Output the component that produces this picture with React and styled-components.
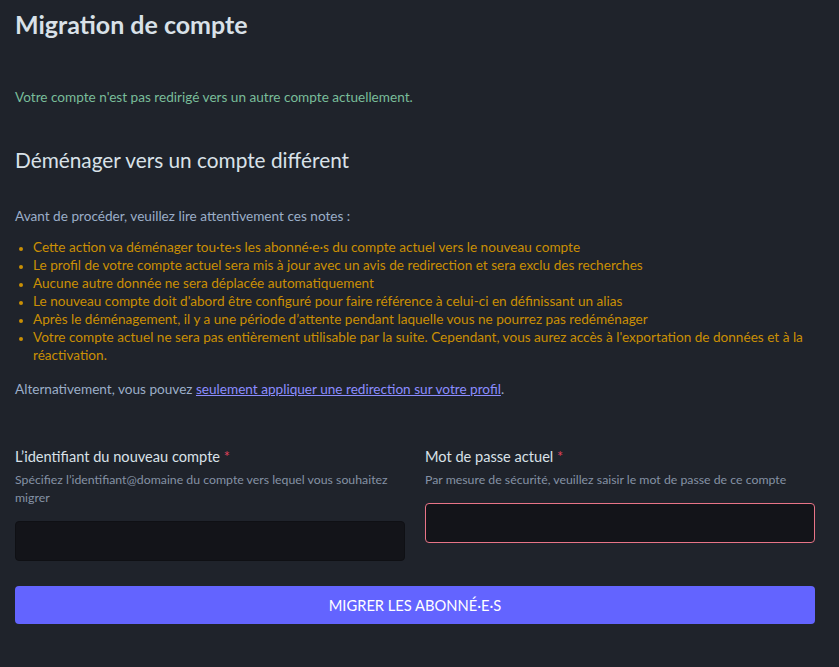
import React from "react";
import styled, { createGlobalStyle } from "styled-components";

const GlobalStyle = createGlobalStyle`
  html, body {
    margin: 0;
    padding: 0;
    background: #1f232b;
  }
  body {
    font-family: Lato, "Noto Sans", sans-serif;
    color: #d9e1e8;
  }
`;

const Page = styled.div`
  width: 800px;
  padding: 10px 15px 40px;
`;

const Title = styled.h2`
  margin: 0 0 50px;
  font-size: 25px;
  line-height: 28px;
  font-weight: 700;
  color: #d9e1e8;
`;

const Notice = styled.p`
  margin: 0 0 41px;
  font-size: 13.6px;
  line-height: 18px;
  color: #79bd9a;
`;

const Subtitle = styled.h3`
  margin: 0 0 34px;
  font-size: 20.8px;
  line-height: 26px;
  font-weight: 400;
  color: #d9e1e8;
`;

const Text = styled.p`
  margin: 0 0 ${({ $gap }) => $gap || 0}px;
  font-size: 13.6px;
  line-height: 18px;
  color: #9baec8;
`;

const Notes = styled.ul`
  margin: 0 0 16px;
  padding-left: 18px;
  font-size: 13.6px;
  line-height: 18px;
  color: #ca8f04;

  li::marker {
    font-size: 11px;
  }
`;

const Link = styled.a`
  color: #8c8dff;
  text-decoration: underline;
`;

const Fields = styled.div`
  display: grid;
  grid-template-columns: 1fr 1fr;
  column-gap: 20px;
  margin-top: 49px;
  margin-bottom: 25px;
`;

const Field = styled.div`
  display: flex;
  flex-direction: column;
`;

const Label = styled.label`
  font-size: 14.6px;
  line-height: 20px;
  font-weight: 400;
  color: #d9e1e8;

  span {
    color: #df405a;
  }
`;

const Hint = styled.div`
  margin-top: 4px;
  font-size: 12.3px;
  line-height: 18px;
  color: #8592a5;
`;

const Input = styled.input`
  box-sizing: border-box;
  width: 100%;
  height: 40px;
  margin-top: 14px;
  padding: 0 10px;
  background: #131419;
  border: 1px solid ${({ $invalid }) => ($invalid ? "#e87487" : "#0f1014")};
  border-radius: 4px;
  color: #d9e1e8;
  font: inherit;
  outline: none;
`;

const Button = styled.button`
  box-sizing: border-box;
  width: 100%;
  height: 38px;
  border: 0;
  border-radius: 4px;
  background: #6364ff;
  color: #ffffff;
  font-family: inherit;
  font-size: 14.7px;
  font-weight: 400;
  text-transform: uppercase;
  cursor: pointer;
`;

const notes = [
  "Cette action va déménager tou·te·s les abonné·e·s du compte actuel vers le nouveau compte",
  "Le profil de votre compte actuel sera mis à jour avec un avis de redirection et sera exclu des recherches",
  "Aucune autre donnée ne sera déplacée automatiquement",
  "Le nouveau compte doit d'abord être configuré pour faire référence à celui-ci en définissant un alias",
  "Après le déménagement, il y a une période d’attente pendant laquelle vous ne pourrez pas redéménager",
  "Votre compte actuel ne sera pas entièrement utilisable par la suite. Cependant, vous aurez accès à l'exportation de données et à la réactivation.",
];

export default function App() {
  return (
    <Page>
      <GlobalStyle />
      <Title>Migration de compte</Title>
      <Notice>Votre compte n'est pas redirigé vers un autre compte actuellement.</Notice>
      <Subtitle>Déménager vers un compte différent</Subtitle>
      <Text $gap={13}>Avant de procéder, veuillez lire attentivement ces notes :</Text>
      <Notes>
        {notes.map((n) => (
          <li key={n}>{n}</li>
        ))}
      </Notes>
      <Text>
        Alternativement, vous pouvez{" "}
        <Link href="#">seulement appliquer une redirection sur votre profil</Link>.
      </Text>
      <Fields>
        <Field>
          <Label>
            L’identifiant du nouveau compte <span>*</span>
          </Label>
          <Hint>Spécifiez l’identifiant@domaine du compte vers lequel vous souhaitez migrer</Hint>
          <Input type="text" />
        </Field>
        <Field>
          <Label>
            Mot de passe actuel <span>*</span>
          </Label>
          <Hint>Par mesure de sécurité, veuillez saisir le mot de passe de ce compte</Hint>
          <Input type="password" $invalid />
        </Field>
      </Fields>
      <Button>Migrer les abonné·e·s</Button>
    </Page>
  );
}
